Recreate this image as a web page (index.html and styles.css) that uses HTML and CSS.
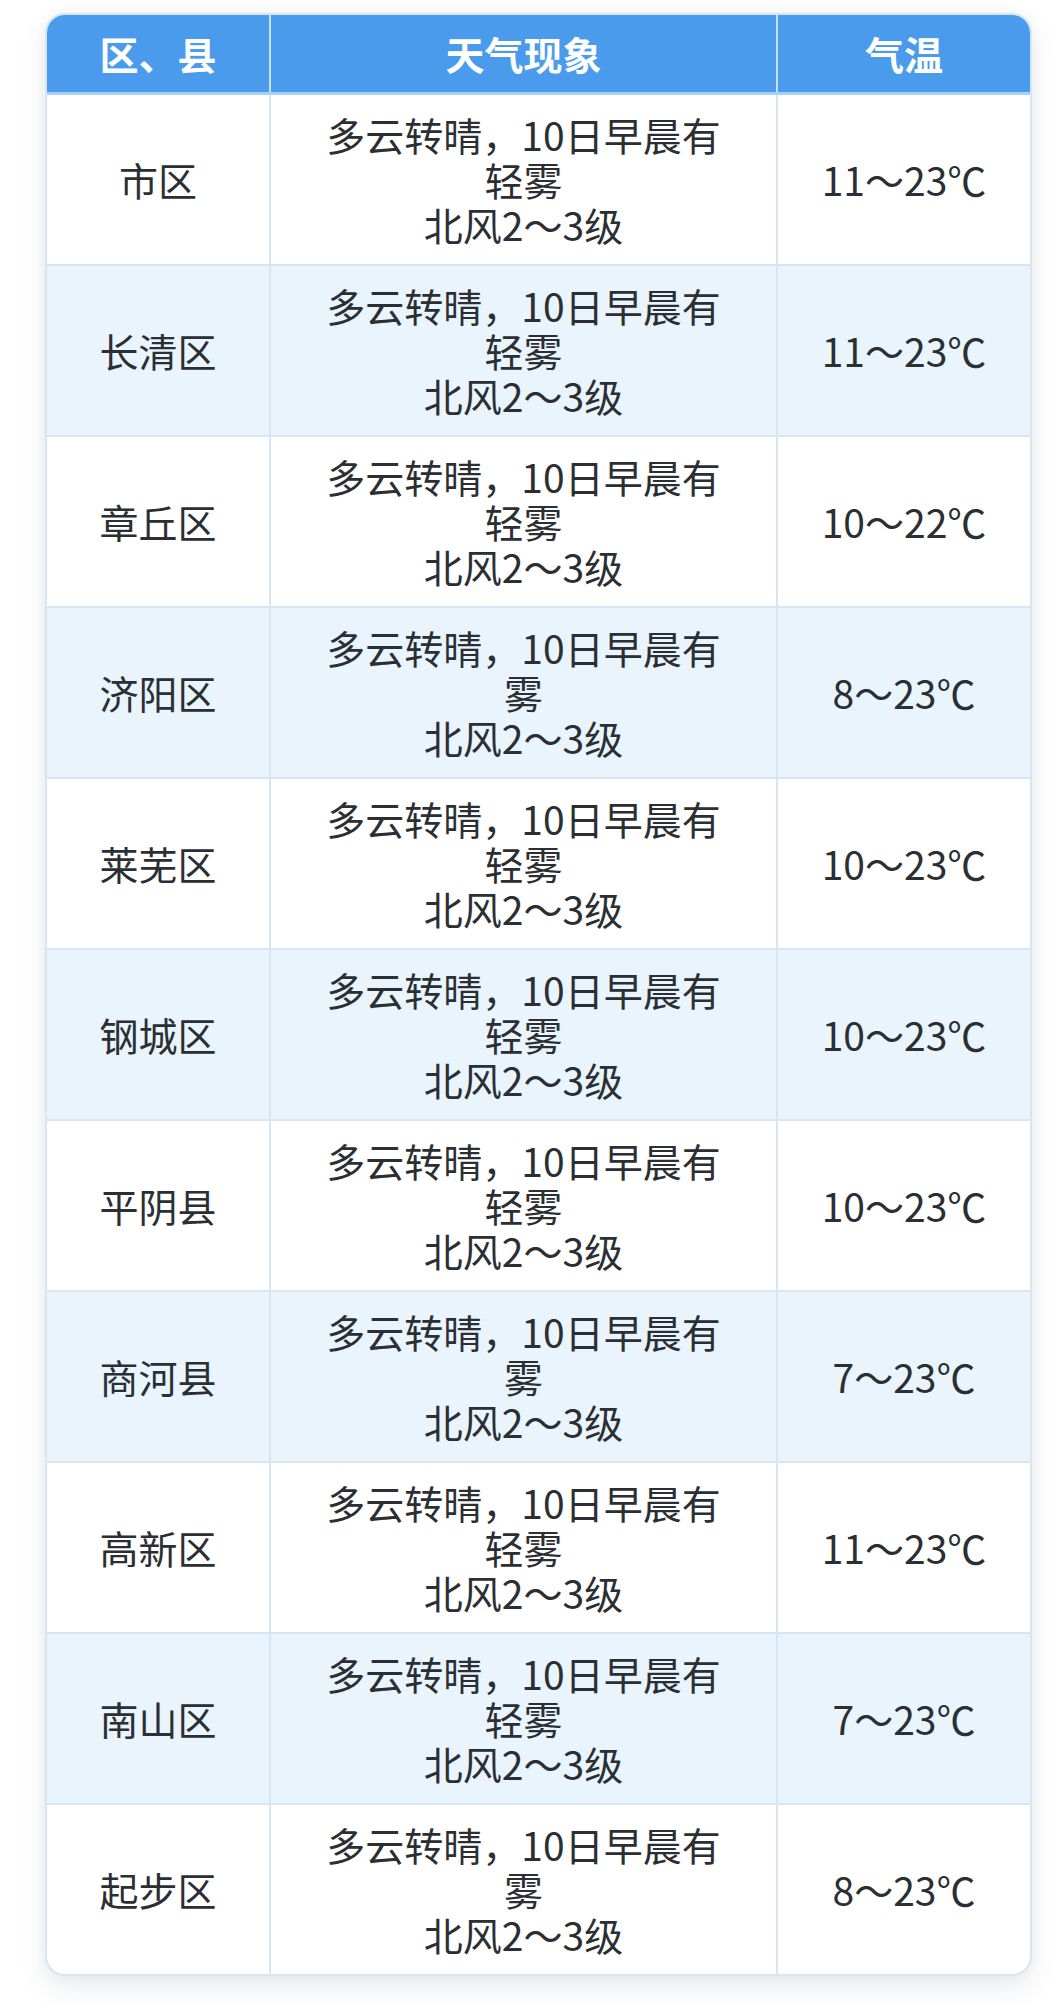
FILE: index.html
```html
<!DOCTYPE html>
<html lang="zh-CN">
<head>
<meta charset="utf-8">
<title>天气预报</title>
<link rel="stylesheet" href="styles.css">
</head>
<body>
<div class="page">
  <div class="card">
    <table class="weather">
      <colgroup>
        <col class="c-area">
        <col class="c-desc">
        <col class="c-temp">
      </colgroup>
      <thead>
        <tr><th>区、县</th><th>天气现象</th><th>气温</th></tr>
      </thead>
      <tbody>
        <tr><td>市区</td><td>多云转晴，10日早晨有<br>轻雾<br>北风2～3级</td><td>11～23℃</td></tr>
        <tr><td>长清区</td><td>多云转晴，10日早晨有<br>轻雾<br>北风2～3级</td><td>11～23℃</td></tr>
        <tr><td>章丘区</td><td>多云转晴，10日早晨有<br>轻雾<br>北风2～3级</td><td>10～22℃</td></tr>
        <tr><td>济阳区</td><td>多云转晴，10日早晨有<br>雾<br>北风2～3级</td><td>8～23℃</td></tr>
        <tr><td>莱芜区</td><td>多云转晴，10日早晨有<br>轻雾<br>北风2～3级</td><td>10～23℃</td></tr>
        <tr><td>钢城区</td><td>多云转晴，10日早晨有<br>轻雾<br>北风2～3级</td><td>10～23℃</td></tr>
        <tr><td>平阴县</td><td>多云转晴，10日早晨有<br>轻雾<br>北风2～3级</td><td>10～23℃</td></tr>
        <tr><td>商河县</td><td>多云转晴，10日早晨有<br>雾<br>北风2～3级</td><td>7～23℃</td></tr>
        <tr><td>高新区</td><td>多云转晴，10日早晨有<br>轻雾<br>北风2～3级</td><td>11～23℃</td></tr>
        <tr><td>南山区</td><td>多云转晴，10日早晨有<br>轻雾<br>北风2～3级</td><td>7～23℃</td></tr>
        <tr><td>起步区</td><td>多云转晴，10日早晨有<br>雾<br>北风2～3级</td><td>8～23℃</td></tr>
      </tbody>
    </table>
  </div>
</div>
</body>
</html>
```
FILE: styles.css
```css
html, body {
  margin: 0;
  padding: 0;
  background: #ffffff;
}

.page {
  padding: 13px 32px 28px 45px;
  font-family: "Noto Sans CJK SC", "Noto Sans", sans-serif;
}

.card {
  width: 987px;
  box-sizing: border-box;
  border: 2px solid #d6e6f3;
  border-radius: 20px;
  overflow: hidden;
  background: #ffffff;
  box-shadow: 0 12px 28px rgba(60, 80, 110, 0.11), 0 0 12px rgba(60, 80, 110, 0.06);
}

.weather {
  width: 100%;
  border-collapse: collapse;
  table-layout: fixed;
  color: #2b2f33;
  font-size: 39px;
  line-height: 45px;
  text-align: center;
}

.c-area { width: 223px; }
.c-desc { width: 507px; }
.c-temp { width: auto; }

.weather th {
  height: 77px;
  padding: 0;
  background: #4b9bec;
  color: #ffffff;
  font-weight: 700;
  font-size: 39px;
  border-left: 2px solid #c9e0f6;
  border-bottom: 3px solid #a9d0f6;
  vertical-align: middle;
}

.weather th:first-child { border-left: none; }

.weather td {
  height: 169px;
  padding: 0;
  border-left: 2px solid #d6e6f3;
  border-top: 2px solid #d6e6f3;
  vertical-align: middle;
}

.weather td:first-child { border-left: none; }
.weather tbody tr:first-child td { border-top: none; }

.weather tbody tr:nth-child(even) td {
  background: #e9f4fd;
}
```
